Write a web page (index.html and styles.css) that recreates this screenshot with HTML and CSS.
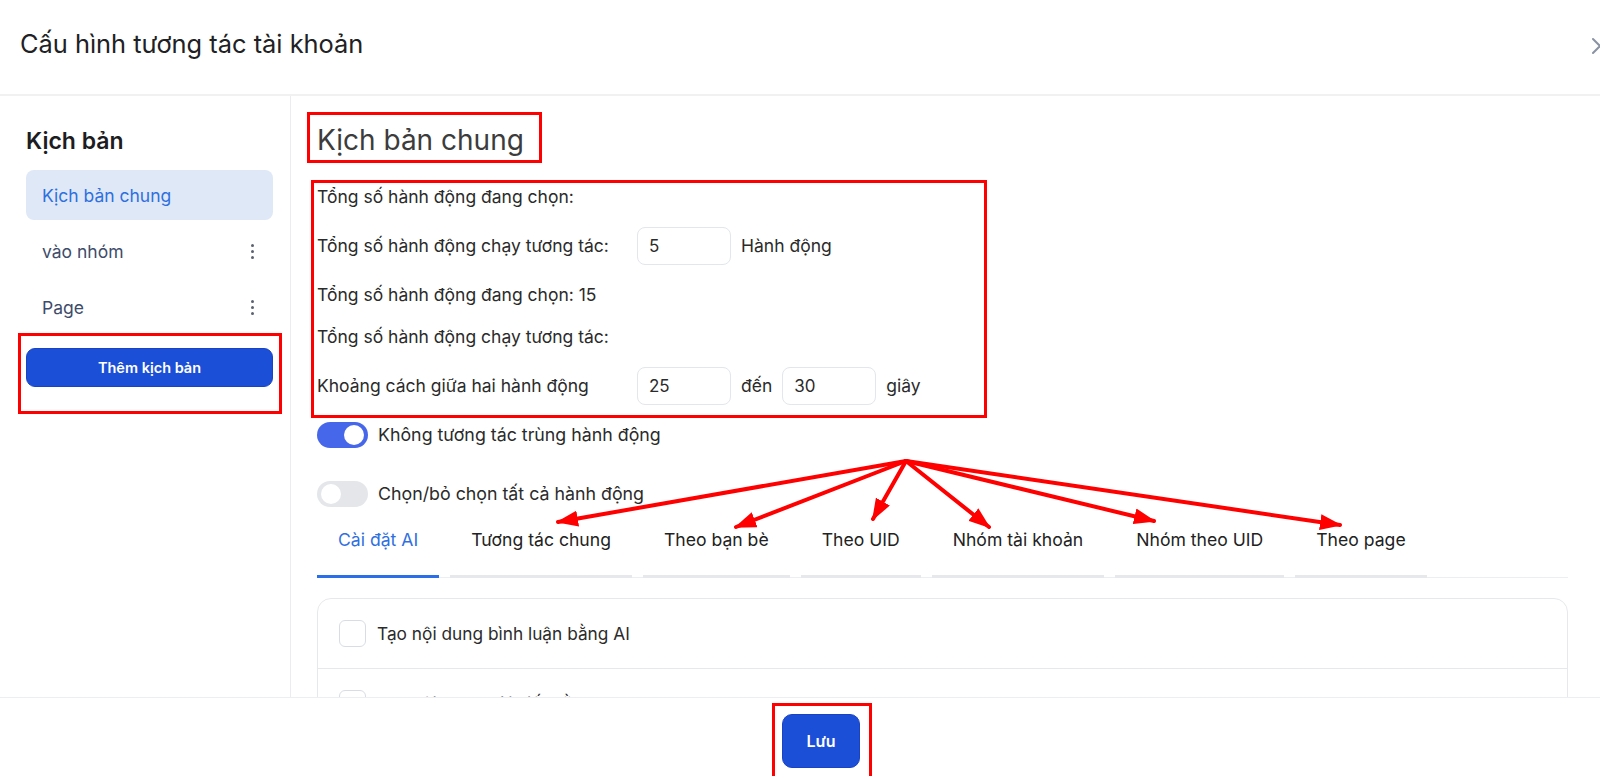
FILE: index.html
```html
<!DOCTYPE html>
<html lang="vi">
<head>
	<meta charset="utf-8">
	<title>Cấu hình tương tác tài khoản</title>
	<link rel="stylesheet" href="styles.css">
</head>
<body>
	<div class="modal">
		<div class="modal-head">
			<h1>Cấu hình tương tác tài khoản</h1>
			<button type="button" class="close">
				<svg width="18" height="18" viewBox="0 0 18 18"><path d="M2 2 L16 16 M16 2 L2 16" stroke="currentColor" stroke-width="2" stroke-linecap="round" fill="none"/></svg>
			</button>
		</div>

		<div class="modal-body">
			<aside class="side">
				<h3>Kịch bản</h3>
				<ul class="scripts">
					<li class="active">Kịch bản chung</li>
					<li>vào nhóm <span class="more"><i></i><i></i><i></i></span></li>
					<li>Page <span class="more"><i></i><i></i><i></i></span></li>
				</ul>
				<div class="add-wrap note">
					<button type="button" class="btn-add">Thêm kịch bản</button>
				</div>
			</aside>

			<main class="content">
				<h2 class="title note">Kịch bản chung</h2>

				<div class="form note">
					<div class="row"><span class="lbl">Tổng số hành động đang chọn:</span></div>
					<div class="row">
						<span class="lbl">Tổng số hành động chạy tương tác:</span>
						<input type="text" class="num" value="5">
						<span>Hành động</span>
					</div>
					<div class="row"><span>Tổng số hành động đang chọn: 15</span></div>
					<div class="row"><span>Tổng số hành động chạy tương tác:</span></div>
					<div class="row">
						<span class="lbl">Khoảng cách giữa hai hành động</span>
						<input type="text" class="num" value="25">
						<span>đến</span>
						<input type="text" class="num" value="30">
						<span>giây</span>
					</div>
				</div>

				<label class="switch-row first"><span class="switch on"></span>Không tương tác trùng hành động</label>
				<label class="switch-row"><span class="switch"></span>Chọn/bỏ chọn tất cả hành động</label>

				<div class="tabs">
					<span class="tab active">Cài đặt AI</span>
					<span class="tab">Tương tác chung</span>
					<span class="tab">Theo bạn bè</span>
					<span class="tab">Theo UID</span>
					<span class="tab">Nhóm tài khoản</span>
					<span class="tab">Nhóm theo UID</span>
					<span class="tab">Theo page</span>
				</div>

				<div class="list">
					<div class="card">
						<label class="opt"><span class="check"></span>Tạo nội dung bình luận bằng AI</label>
						<label class="opt"><span class="check"></span>Tạo nội dung bài viết bằng AI</label>
					</div>
				</div>
			</main>
		</div>

		<div class="modal-foot">
			<div class="save-wrap note">
				<button type="button" class="btn-save">Lưu</button>
			</div>
		</div>

		<!-- annotation arrows -->
		<svg class="arrows" width="1642" height="776" viewBox="0 0 1642 776">
			<defs>
				<marker id="head" markerUnits="userSpaceOnUse" markerWidth="22" markerHeight="16" refX="20" refY="8" orient="auto">
					<path d="M0 0 L22 8 L0 16 Z" fill="#ff0000"/>
				</marker>
			</defs>
			<g stroke="#ff0000" stroke-width="4" stroke-linecap="round" marker-end="url(#head)">
				<line x1="906" y1="461" x2="558" y2="522"/>
				<line x1="906" y1="461" x2="736" y2="527"/>
				<line x1="906" y1="461" x2="873" y2="519"/>
				<line x1="906" y1="461" x2="989" y2="527"/>
				<line x1="906" y1="461" x2="1154" y2="521"/>
				<line x1="906" y1="461" x2="1340" y2="525"/>
			</g>
		</svg>
	</div>
</body>
</html>
```

FILE: styles.css
```css
* {
	box-sizing: border-box;
}

html, body {
	margin: 0;
	height: 100%;
	overflow: hidden;
}

body {
	font-family: Inter, "Noto Sans", sans-serif;
	color: #2b2b2b;
	background: #fff;
}

.modal {
	position: relative;
	width: 1642px;
	height: 776px;
	display: flex;
	flex-direction: column;
}

.modal-head {
	height: 96px;
	flex: none;
	display: flex;
	justify-content: space-between;
	align-items: flex-start;
	padding: 28px 33px 0 20px;
	border-bottom: 2px solid #f1f1f2;
}

	.modal-head h1 {
		margin: 0;
		font-size: 25.4px;
		font-weight: 400;
		line-height: 32px;
		color: #202124;
	}

.close {
	border: 0;
	background: none;
	padding: 0;
	width: 18px;
	height: 18px;
	margin-top: 9px;
	color: #8b93a3;
}

.modal-body {
	flex: 1;
	display: flex;
	min-height: 0;
}

/* sidebar */
.side {
	width: 291px;
	flex: none;
	border-right: 1px solid #ececee;
	padding: 31px 17px 0 26px;
}

	.side h3 {
		margin: 0 0 15px;
		font-size: 23px;
		font-weight: 600;
		line-height: 28px;
		color: #1d1d1f;
	}

.scripts {
	list-style: none;
	margin: 0;
	padding: 0;
}

	.scripts li {
		height: 50px;
		margin-bottom: 6px;
		padding: 0 16px;
		border-radius: 8px;
		display: flex;
		align-items: center;
		justify-content: space-between;
		font-size: 17.5px;
		color: #3e4c6b;
	}

		.scripts li.active {
			background: #dfe8f6;
			color: #2f6fe0;
		}

.more {
	display: flex;
	flex-direction: column;
	gap: 3px;
	margin-right: 3px;
}

	.more i {
		width: 3px;
		height: 3px;
		border-radius: 50%;
		background: #5a6272;
	}

.add-wrap {
	margin-top: 16px;
}

.btn-add {
	width: 100%;
	height: 39px;
	border: 1px solid #1943c2;
	border-radius: 9px;
	background: #1c4fd7;
	color: #fff;
	font-family: inherit;
	font-size: 14.5px;
	font-weight: 600;
}

/* red annotation frames */
.note {
	position: relative;
}

	.note::after {
		content: "";
		position: absolute;
		border: 3px solid #ff0000;
		pointer-events: none;
	}

.add-wrap::after {
	inset: -15px -9px -27px -8px;
}

.title::after {
	inset: -8px -18px -3px -10px;
}

.form::after {
	inset: -5px -7px -13px -6px;
}

.save-wrap::after {
	inset: -11px -12px -12px -10px;
}

/* main */
.content {
	flex: 1;
	min-width: 0;
	overflow: hidden;
	padding: 24px 74px 0 26px;
}

.title {
	display: inline-block;
	margin: 0;
	font-size: 28px;
	font-weight: 400;
	line-height: 40px;
	color: #3c3c3c;
}

.form {
	width: 663px;
	margin-top: 25px;
	font-size: 17.5px;
	line-height: 24px;
}

.row {
	display: flex;
	align-items: center;
	gap: 10px;
	margin-bottom: 18px;
	white-space: nowrap;
}

	.row:last-child {
		margin-bottom: 0;
	}

.lbl {
	width: 310px;
}

.num {
	width: 94px;
	height: 38px;
	border: 1px solid #e3e6ea;
	border-radius: 8px;
	padding: 0 11px;
	font-family: inherit;
	font-size: 17px;
	color: #2b2b2b;
}

.switch-row {
	display: flex;
	align-items: center;
	gap: 10px;
	margin-top: 33px;
	font-size: 17.8px;
	line-height: 26px;
}

	.switch-row.first {
		margin-top: 17px;
	}

.switch {
	position: relative;
	width: 51px;
	height: 26px;
	border-radius: 13px;
	background: #e4e6ea;
}

	.switch::before {
		content: "";
		position: absolute;
		top: 3px;
		left: 4px;
		width: 20px;
		height: 20px;
		border-radius: 50%;
		background: #fff;
	}

	.switch.on {
		background: #4767ea;
	}

		.switch.on::before {
			left: 27px;
		}

.tabs {
	display: flex;
	gap: 11px;
	margin-top: 9px;
	border-bottom: 1px solid #eceef1;
}

.tab {
	padding: 12px 21px 23px;
	margin-bottom: -1px;
	border-bottom: 3px solid #e6e8ec;
	font-size: 17.6px;
	line-height: 24px;
	color: #222;
	white-space: nowrap;
}

	.tab.active {
		color: #2f6fe0;
		border-bottom-color: #2a6ee8;
	}

.list {
	margin-top: 20px;
	height: 300px;
	overflow-y: scroll;
}

	.list::-webkit-scrollbar {
		width: 5px;
	}

	.list::-webkit-scrollbar-track {
		background: transparent;
	}

	.list::-webkit-scrollbar-thumb {
		background: #d5d5d5;
		border-radius: 3px;
	}

.card {
	min-height: 560px;
	border: 1px solid #e6e8eb;
	border-radius: 14px;
}

.opt {
	display: flex;
	align-items: center;
	gap: 11px;
	height: 70px;
	padding: 0 21px;
	font-size: 17.3px;
	border-bottom: 1px solid #e6e8eb;
}

.check {
	width: 27px;
	height: 27px;
	border: 1px solid #d9dde3;
	border-radius: 6px;
}

/* footer */
.modal-foot {
	height: 79px;
	flex: none;
	display: flex;
	justify-content: center;
	align-items: flex-start;
	padding-top: 16px;
	border-top: 1px solid #eceef1;
}

.btn-save {
	width: 78px;
	height: 54px;
	border: 1px solid #1943c2;
	border-radius: 10px;
	background: #1c4fd7;
	color: #fff;
	font-family: inherit;
	font-size: 16px;
	font-weight: 600;
}

.arrows {
	position: absolute;
	top: 0;
	left: 0;
	pointer-events: none;
}
```
